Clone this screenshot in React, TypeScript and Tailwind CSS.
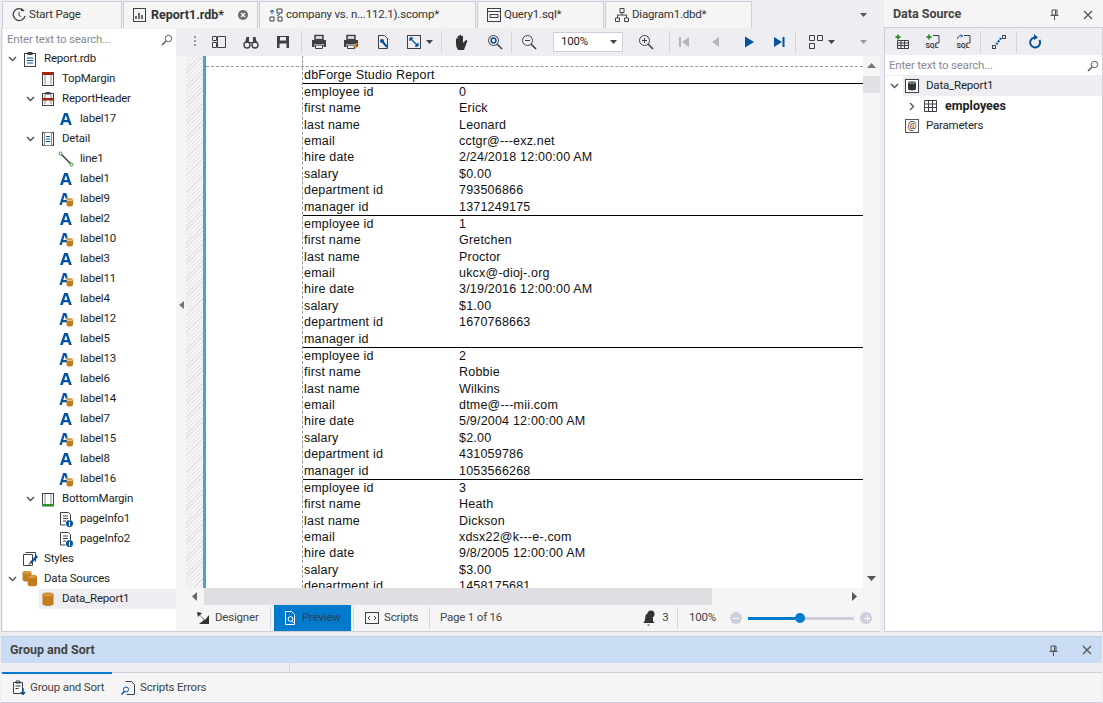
import React from "react";

const UI = "font-['Roboto','Noto_Sans',sans-serif]";
const BOLD = "font-bold text-[12.5px] tracking-normal";

const Ic = ({ children, w = 16, h = 16 }: { children: React.ReactNode; w?: number; h?: number }) => (
  <svg width={w} height={h} viewBox={`0 0 ${w} ${h}`} fill="none" className="shrink-0">
    {children}
  </svg>
);

const D = "#3f3f46";
const B = "#00539c";
const O = "#c27d1e";

const Can = () => (
  <>
    <path d="M2 4v8.500c0 1 2 2 5.500 2s5.500-1 5.500-2V4z" fill={O} />
    <ellipse cx="7.500" cy="3.500" rx="5.500" ry="2" fill="#d99a3f" stroke={O} />
  </>
);

const LabelA = () => (
  <path d="M6.200 2h3.400l4.200 12h-2.700l-.9-2.800H5.600L4.700 14H2zM6.300 9h3.200L7.900 4.200z" fill={B} fillRule="evenodd" />
);

const LabelDb = () => (
  <>
    <path d="M5.200 2h3l3.800 12H9.600l-.8-2.800H4.600L3.800 14H1.400zM5.200 9h3L6.700 4.200z" fill={B} fillRule="evenodd" />
    <path d="M8.500 8.500V14c0 .8 1.300 1.500 3.200 1.500s3.300-.7 3.300-1.500V8.500z" fill={O} />
    <ellipse cx="11.700" cy="8.200" rx="3.300" ry="1.400" fill="#d99a3f" stroke="#fff" strokeWidth=".5" />
  </>
);

const PageInfo = () => (
  <>
    <path d="M2.500 1.500h8l2 2v6M2.500 1.500v12.500h5" stroke={D} />
    <path d="M5 5h5M5 7.500h5M5 10h3" stroke={D} />
    <circle cx="11.500" cy="12.500" r="3.500" fill={B} />
    <path d="M11.500 11v4M11.500 9.500v.8" stroke="#fff" strokeWidth="1.200" />
  </>
);

const Band = ({ kind }: { kind: string }) => (
  <>
    <rect x="2.500" y={kind === "top" ? 1.500 : 2.500} width="11" height={kind === "top" ? 13 : 12} stroke={D} fill="#fff" />
    <path d="M5 2.500v11M11 2.500v11" stroke="#8a8a8a" />
    {kind === "top" && <rect x="2" y="1" width="12" height="3" fill="#a1260d" />}
    {kind === "head" && <rect x="2" y="7" width="12" height="2.500" fill="#a1260d" />}
    {kind === "bottom" && <rect x="2" y="13" width="12" height="2.500" fill="#388a34" />}
  </>
);

type Row = { d: number; t: string; open?: boolean; sel?: boolean; icon: React.ReactNode };

const rows: Row[] = [
  { d: 0, t: "Report.rdb", open: true, icon: <><rect x="2.500" y="2.500" width="11" height="13" stroke={D} fill="#fff" /><rect x="5.500" y="1" width="5" height="3" fill={D} /><path d="M5 7h6M5 9.500h6M5 12h6" stroke={B} /></> },
  { d: 1, t: "TopMargin", icon: <Band kind="top" /> },
  { d: 1, t: "ReportHeader", open: true, icon: <><Band kind="head" /><rect x="5.500" y="1" width="5" height="2.500" fill={D} /></> },
  { d: 2, t: "label17", icon: <LabelA /> },
  { d: 1, t: "Detail", open: true, icon: <><rect x="2.500" y="1.500" width="11" height="13" stroke={D} fill="#fff" /><rect x="4.500" y="1.500" width="7" height="13" stroke="#8a8a8a" /><path d="M6 5.500h4M6 8h4M6 10.500h4" stroke={B} /></> },
  { d: 2, t: "line1", icon: <><path d="M3 3l10 10" stroke={D} strokeWidth="1.500" /><circle cx="2.500" cy="2.500" r="1.500" fill="#fff" stroke="#388a34" /><circle cx="13.500" cy="13.500" r="1.500" fill="#fff" stroke="#388a34" /></> },
  ...[
    ["label1", 0], ["label9", 1], ["label2", 0], ["label10", 1], ["label3", 0], ["label11", 1], ["label4", 0], ["label12", 1],
    ["label5", 0], ["label13", 1], ["label6", 0], ["label14", 1], ["label7", 0], ["label15", 1], ["label8", 0], ["label16", 1],
  ].map(([t, db]) => ({ d: 2, t: t as string, icon: db ? <LabelDb /> : <LabelA /> })),
  { d: 1, t: "BottomMargin", open: true, icon: <Band kind="bottom" /> },
  { d: 2, t: "pageInfo1", icon: <PageInfo /> },
  { d: 2, t: "pageInfo2", icon: <PageInfo /> },
  { d: 0, t: "Styles", icon: <><path d="M1.500 3.500h9v11h-9z" stroke={D} fill="#fff" /><path d="M3.500 1.500h10v9" stroke={D} /><path d="M14.500 4L8 11l-1.500 3 3-1.500L16 6z" fill={B} /><path d="M6.500 14l1.500-3 1.500 1.500z" fill={O} /></> },
  { d: 0, t: "Data Sources", open: true, icon: <><g transform="translate(-1,-1) scale(.8)"><Can /></g><g transform="translate(4,3) scale(.85)"><Can /></g></> },
  { d: 1, t: "Data_Report1", sel: true, icon: <g transform="translate(.5,0.5)"><Can /></g> },
];

const pad = ["pl-0", "pl-[18px]", "pl-[36px]"];

const Chevron = ({ open }: { open?: boolean }) => (
  <span className="w-[18px] flex justify-center shrink-0">
    {open && (
      <svg width="9" height="6" viewBox="0 0 9 6"><path d="M1 1l3.500 3.500L8 1" stroke="#555" strokeWidth="1.500" fill="none" /></svg>
    )}
  </span>
);

const Tree = () => (
  <div className="flex-1 bg-white overflow-hidden">
    {rows.map((r) => (
      <div key={r.t} className={`h-5 flex items-center ${pad[r.d]}`}>
        <Chevron open={r.open} />
        <div className={`h-5 flex-1 flex items-center ${r.sel ? "bg-[#eeeef2]" : ""}`}>
          <span className="w-[18px] flex justify-center"><Ic>{r.icon}</Ic></span>
          <span className="pl-[5px] text-[#1e1e1e]">{r.t}</span>
        </div>
      </div>
    ))}
  </div>
);

const Search = () => (
  <div className="h-5 pt-px bg-white flex items-center justify-between pl-[4px] pr-[3px] text-[#8a8a94] shrink-0">
    <span>Enter text to search...</span>
    <svg width="12" height="12" viewBox="0 0 12 12" fill="none"><circle cx="7.500" cy="4.500" r="3.200" stroke="#555" /><path d="M5 7l-4 4" stroke="#555" strokeWidth="1.400" /></svg>
  </div>
);

const Tab = ({ w, icon, label, active }: { w: string; icon: React.ReactNode; label: string; active?: boolean }) => (
  <div className={`${w} h-[27px] mt-px bg-[#f5f5f5] border border-b-0 border-[#cccedb] flex items-center pl-[8px] gap-[2px] text-[#333] shrink-0`}>
    <Ic>{icon}</Ic>
    <span className={active ? `${BOLD} flex-1 ml-[1px]` : "flex-1"}>{label}</span>
    {active && (
      <span className="w-[10px] h-[10px] mr-[9px] rounded-full bg-[#6d6d6d] flex items-center justify-center">
        <svg width="6" height="6" viewBox="0 0 6 6"><path d="M1 1l4 4M5 1L1 5" stroke="#fff" strokeWidth="1.200" /></svg>
      </span>
    )}
  </div>
);

const Btn = ({ w = "w-8", children }: { w?: string; children: React.ReactNode }) => (
  <div className={`${w} h-full flex items-center justify-center shrink-0`}>{children}</div>
);

const Sep = ({ m = "mx-[2px]" }: { m?: string }) => <div className={`w-px h-[22px] bg-[#d4d4dc] shrink-0 ${m}`} />;

const Arrow = () => (
  <svg width="7" height="4" viewBox="0 0 7 4" className="ml-[4px]"><path d="M0 0h7L3.500 4z" fill="#444" /></svg>
);

const Printer = ({ flash }: { flash?: boolean }) => (
  <Ic>
    <path d="M4 1.500h8v4H4z" stroke={D} strokeWidth="1.500" />
    <path d="M1 6h14v7h-2.500v-3h-9v3H1z" fill={D} />
    <path d="M4.500 11h7v3.500h-7z" stroke={D} />
    {flash && <path d="M13 9l-3 4h2l-1 3 4-4h-2l2-3z" fill="#d98a1e" />}
  </Ic>
);

const Glass = ({ sign }: { sign?: string }) => (
  <Ic>
    <circle cx="6.500" cy="6.500" r="5" stroke={D} />
    <path d="M10 10l5 5" stroke={D} strokeWidth="1.600" />
    {sign && sign !== "o" && <path d="M4 6.500h5" stroke={D} />}
    {sign === "+" && <path d="M6.500 4v5" stroke={D} />}
    {sign === "o" && <circle cx="6.500" cy="6.500" r="2.400" stroke={B} strokeWidth="1.500" />}
  </Ic>
);

const Toolbar = () => (
  <div className="h-[28px] bg-[#eeeef2] flex items-center shrink-0">
    <div className="w-[27px] flex justify-end pr-[7px]">
      <div className="w-[2px] h-[12px] bg-[repeating-linear-gradient(#9a9a9a_0,#9a9a9a_2px,transparent_2px,transparent_4px)]" />
    </div>
    <Btn><Ic><path d="M1.500 2.500h4v4h-4zM1.500 8.500h4v5h-4zM6.500 2.500h8v11h-8z" stroke={D} /></Ic></Btn>
    <Btn><Ic><circle cx="4" cy="11" r="3" stroke={D} strokeWidth="1.400" /><circle cx="12" cy="11" r="3" stroke={D} strokeWidth="1.400" /><path d="M2 9l1.500-6h2.500v5h4V3h2.500L14 9z" fill={D} /></Ic></Btn>
    <Btn><Ic><path d="M2 2h12v12H2z" fill={D} /><path d="M5 3h6v3.500H5z" fill="#eeeef2" /><path d="M4.500 9.500h7V14h-7z" fill="#eeeef2" /></Ic></Btn>
    <Sep m="ml-[2px] mr-px" />
    <Btn><Printer /></Btn>
    <Btn w="w-[31px]"><Printer flash /></Btn>
    <Btn w="w-[33px]"><Ic><path d="M3.500 1.500h6l3 3v10h-9z" stroke={D} /><path d="M7 7l5 6" stroke={B} strokeWidth="2" /><circle cx="7" cy="7" r="2" fill={B} /></Ic></Btn>
    <Btn w="w-[40px]">
      <Ic><rect x="1.500" y="1.500" width="13" height="13" stroke={D} /><path d="M4 4l8 8M4 4h3M4 4v3M12 12H9M12 12V9" stroke={B} strokeWidth="1.300" /></Ic>
      <Arrow />
    </Btn>
    <Sep m="mx-[2px]" />
    <Btn w="w-[36px]"><Ic w={18} h={18}><path d="M3 10V6c0-1 1.600-1 1.600 0v2.500V3.500c0-1 1.800-1 1.800 0v5V2.500c0-1 1.800-1 1.800 0v6V3.500c0-1 1.800-1 1.800 0V10l2.500-2.500c1-1 2.200 0 1.500 1.200L11 17H6c-1.500 0-3-3-3-7z" fill="#333" /></Ic></Btn>
    <Btn w="w-[29px]"><Glass sign="o" /></Btn>
    <Sep m="mx-[2px]" />
    <Btn w="w-[29px]"><Glass sign="-" /></Btn>
    <div className="ml-[10px] w-[70px] h-[20px] bg-white border border-[#cccedb] flex items-center justify-between pl-[7px] pr-[5px] text-[#1e1e1e]">
      100%
      <svg width="7" height="4" viewBox="0 0 7 4"><path d="M0 0h7L3.500 4z" fill="#444" /></svg>
    </div>
    <Btn w="w-[46px]"><Glass sign="+" /></Btn>
    <Sep m="mx-0" />
    <Btn w="w-[27px]"><Ic><path d="M3 3h2v10H3zM13 3v10L6 8z" fill="#b4b4ba" /></Ic></Btn>
    <Btn w="w-[35px]"><Ic><path d="M12 3v10L5 8z" fill="#b4b4ba" /></Ic></Btn>
    <Btn w="w-[33px]"><Ic><path d="M4 2.500v11L13 8z" fill={B} /></Ic></Btn>
    <Btn w="w-[27px]"><Ic><path d="M3 3v10l8-5zM11.500 3h2v10h-2z" fill={B} /></Ic></Btn>
    <Sep m="mx-[3px]" />
    <Btn w="w-[44px]">
      <Ic><path d="M1.500 1.500h5v5h-5zM9.500 1.500h5v5h-5zM1.500 9.500h5v5h-5z" stroke={D} /></Ic>
      <Arrow />
    </Btn>
    <div className="ml-auto mr-[13px]"><svg width="7" height="4" viewBox="0 0 7 4"><path d="M0 0h7L3.500 4z" fill="#999" /></svg></div>
  </div>
);

const fields = ["employee id", "first name", "last name", "email", "hire date", "salary", "department id", "manager id"];

const records = [
  ["0", "Erick", "Leonard", "cctgr@---exz.net", "2/24/2018 12:00:00 AM", "$0.00", "793506866", "1371249175"],
  ["1", "Gretchen", "Proctor", "ukcx@-dioj-.org", "3/19/2016 12:00:00 AM", "$1.00", "1670768663", ""],
  ["2", "Robbie", "Wilkins", "dtme@---mii.com", "5/9/2004 12:00:00 AM", "$2.00", "431059786", "1053566268"],
  ["3", "Heath", "Dickson", "xdsx22@k---e-.com", "9/8/2005 12:00:00 AM", "$3.00", "1458175681", ""],
];

const Record = ({ values }: { values: string[] }) => (
  <div className="h-[132px] border-t border-black shrink-0 flex flex-col">
    {fields.map((f, i) => (
      <div key={f} className="flex-1 flex items-center pl-px leading-none">
        <span className="w-[155px] shrink-0">{f}</span>
        <span>{values[i]}</span>
      </div>
    ))}
  </div>
);

const Report = () => (
  <div className="flex-1 min-h-0 flex">
    <div className="flex-1 min-w-0 flex bg-white overflow-hidden">
      <div className="w-[17px] shrink-0 bg-[repeating-linear-gradient(135deg,#e2e2e2_0,#e2e2e2_1px,#f5f5f5_1px,#f5f5f5_3px)]" />
      <div className="w-[3px] shrink-0 bg-[#4a9fe0]" />
      <div className="flex-1 min-w-0 flex flex-col font-['Liberation_Sans',sans-serif] text-[12.5px] text-[#111] tracking-[0.2px]">
        <div className="h-[11px] border-b border-dashed border-[#999] shrink-0 pl-[96px]">
          <div className="w-px h-[11px] border-l border-dashed border-[#999]" />
        </div>
        <div className="flex-1 min-h-0 flex">
          <div className="w-[96px] shrink-0" />
          <div className="flex-1 min-w-0 border-l border-dashed border-[#999] overflow-hidden flex flex-col">
            <div className="h-[16px] flex items-center pl-px shrink-0">dbForge Studio Report</div>
            {records.map((v) => <Record key={v[0]} values={v} />)}
          </div>
        </div>
      </div>
    </div>
    <div className="w-[17px] shrink-0 bg-[#f5f5f5] flex flex-col items-center">
      <svg width="9" height="5" viewBox="0 0 9 5" className="mt-[7px]"><path d="M0 5h9L4.500 0z" fill="#777" /></svg>
      <div className="w-full h-[17px] bg-[#e0e0e5] mt-[8px]" />
      <svg width="9" height="5" viewBox="0 0 9 5" className="mt-auto mb-[7px]"><path d="M0 0h9L4.500 5z" fill="#555" /></svg>
    </div>
  </div>
);

const HScroll = () => (
  <div className="h-[17px] shrink-0 bg-[#f5f5f5] flex items-center">
    <svg width="5" height="9" viewBox="0 0 5 9" className="ml-[16px] mr-[7px]"><path d="M5 0v9L0 4.500z" fill="#666" /></svg>
    <div className="w-[508px] h-full bg-[#dedee3]" />
    <svg width="5" height="9" viewBox="0 0 5 9" className="ml-[140px]"><path d="M0 0v9l5-4.500z" fill="#555" /></svg>
  </div>
);

const StatusBar = () => (
  <div className="h-[26px] shrink-0 bg-[#f5f5f5] flex items-center text-[#444]">
    <div className="w-[94px] pl-[20px] flex items-center gap-[5px] h-full">
      <Ic w={14} h={14}><path d="M1 1l8 8 4-5v9H3l5-4z" fill="#333" /><path d="M1 1l5 1-4 4z" fill="#333" /></Ic>
      Designer
    </div>
    <Sep m="mr-[3px]" />
    <div className="w-[77px] h-full bg-[#007acc] flex items-center pl-[9px] gap-[5px] text-[#30404f]">
      <Ic w={14} h={14}><path d="M2.500 .5h6l3 3v10h-9z" stroke="#fff" /><circle cx="7.500" cy="8" r="2.400" stroke="#fff" /><path d="M9 10l3 3" stroke="#fff" /></Ic>
      Preview
    </div>
    <Sep m="ml-[2px]" />
    <div className="flex items-center pl-[11px] gap-[5px] w-[75px]">
      <Ic w={14} h={14}><rect x=".5" y="1.500" width="13" height="11" stroke={D} /><path d="M5 5L3 7l2 2M9 5l2 2-2 2" stroke={D} /></Ic>
      Scripts
    </div>
    <Sep m="mr-[10px]" />
    <span>Page 1 of 16</span>
    <div className="ml-auto flex items-center">
      <Ic><path d="M2 13c2-1 2-4 2.500-7S7 3 8 4c-1 2 1 4 4 3v4l1.500 2z" fill="#333" /><circle cx="10" cy="4" r="3.500" fill="#333" /><path d="M6.500 15h2" stroke="#333" /></Ic>
      <span className="ml-[2px] w-[13px] text-center">3</span>
      <Sep m="ml-[5px]" />
      <span className="ml-[11px] w-[28px]">100%</span>
      <div className="ml-[13px] w-[12px] h-[12px] rounded-full bg-[#cccedb] flex items-center justify-center"><div className="w-[6px] h-px bg-white" /></div>
      <div className="mx-[6px] w-[106px] h-[3px] bg-[#cccedb] flex items-center">
        <div className="w-[47px] h-full bg-[#007acc]" />
        <div className="w-[10px] h-[10px] rounded-full bg-[#007acc]" />
      </div>
      <div className="mr-[8px] w-[12px] h-[12px] rounded-full bg-[#cccedb] flex items-center justify-center">
        <div className="w-[6px] h-px bg-white" />
        <div className="w-px h-[6px] bg-white -ml-[3.500px]" />
      </div>
    </div>
  </div>
);

const PinClose = () => (
  <div className="flex items-center gap-[24px] text-[#444]">
    <svg width="9" height="11" viewBox="0 0 9 11" fill="none"><path d="M2 1h5v5H2zM.5 6.500h8M4.500 7v4M5.500 1v5" stroke="#555" /></svg>
    <svg width="10" height="10" viewBox="0 0 10 10"><path d="M1 1l8 8M9 1L1 9" stroke="#555" strokeWidth="1.300" /></svg>
  </div>
);

const DsRow = ({ children, bg }: { children: React.ReactNode; bg?: string }) => (
  <div className={`h-5 flex items-center ${bg || ""}`}>{children}</div>
);

const SqlIcon = ({ children }: { children: React.ReactNode }) => (
  <div className="relative w-4 h-4">
    <Ic><path d="M8 1.500h6v7.500h-3" stroke={D} />{children}</Ic>
    <span className="absolute left-[1px] top-[9px] text-[7px] leading-none font-bold tracking-normal text-[#333]">SQL</span>
  </div>
);

const DataSource = () => (
  <div className="w-[219px] ml-[4px] shrink-0 flex flex-col bg-white">
    <div className="h-[28px] pt-[2px] bg-[#f5f5f5] flex items-center justify-between pl-[9px] pr-[10px] border-b border-[#cccedb] shrink-0">
      <span className={`${BOLD} text-[#444]`}>Data Source</span>
      <PinClose />
    </div>
    <div className="flex-1 flex flex-col border border-t-0 border-[#cccedb] min-h-0">
      <div className="h-[27px] bg-[#eeeef2] flex items-center pl-px shrink-0">
        <Btn w="w-[31px]"><Ic><path d="M3.500 6.500h11v8h-11zM3.500 9h11M3.500 11.500h11M7 6.500v8M10.500 6.500v8" stroke={D} /><path d="M4 .5v5M1.500 3h5" stroke="#388a34" strokeWidth="1.800" /></Ic></Btn>
        <Btn w="w-[31px]"><SqlIcon><path d="M4 .5v5M1.500 3h5" stroke="#388a34" strokeWidth="1.800" /></SqlIcon></Btn>
        <Btn w="w-[31px]"><SqlIcon><path d="M1.500 5c0-3 3-4 5-3M6.500 2l-1.500-1.500M6.500 2L5 3.500" stroke={B} /></SqlIcon></Btn>
        <Sep m="mx-[1px]" />
        <Btn w="w-[33px]"><Ic><path d="M10 4L5 11" stroke={B} strokeWidth="2" strokeDasharray="2 1" /><rect x="1.500" y="11.500" width="3" height="3" stroke={D} /><rect x="11.500" y="1.500" width="3" height="3" stroke={D} /></Ic></Btn>
        <Sep m="mx-[1px]" />
        <Btn w="w-[34px]"><Ic><path d="M12.500 6a5 5 0 1 1-3.500-2.500" stroke={B} strokeWidth="2" /><path d="M7 0l4 3.500L7 6z" fill={B} /></Ic></Btn>
      </div>
      <Search />
      <div className="flex-1 pt-0 border-t border-[#eeeef2]">
        <DsRow>
          <Chevron open />
          <div className="flex-1 h-5 bg-[#eeeef2] flex items-center">
            <span className="w-[18px] flex justify-center"><Ic><rect x="1.500" y="1.500" width="13" height="13" stroke={D} fill="#fff" /><path d="M4 5v6c0 .7 1.700 1.500 4 1.500s4-.8 4-1.500V5z" fill="#333" /><ellipse cx="8" cy="4.500" rx="4" ry="1.500" fill="#777" /></Ic></span>
            <span className="pl-[5px] text-[#1e1e1e]">Data_Report1</span>
          </div>
        </DsRow>
        <DsRow>
          <span className="w-[18px]" />
          <span className="w-[18px] flex justify-center"><svg width="6" height="9" viewBox="0 0 6 9"><path d="M1 1l3.500 3.500L1 8" stroke="#555" strokeWidth="1.400" fill="none" /></svg></span>
          <span className="w-[18px] flex justify-center"><Ic><path d="M2.500 2.500h12v11h-12zM2.500 6h12M2.500 9.500h12M6.500 2.500v11M10.500 2.500v11" stroke={D} /></Ic></span>
          <span className={`pl-[6px] ${BOLD} text-[#1e1e1e]`}>employees</span>
        </DsRow>
        <DsRow>
          <span className="w-[18px]" />
          <span className="w-[18px] flex justify-center"><span className="w-[14px] h-[14px] border border-[#555] flex items-center justify-center text-[10px] leading-none text-[#333]">@</span></span>
          <span className="pl-[5px] text-[#1e1e1e]">Parameters</span>
        </DsRow>
      </div>
    </div>
  </div>
);

const BottomPanel = () => (
  <div className="flex-1 flex flex-col mt-[4px] mx-px min-h-0">
    <div className="h-[27px] bg-[#c9dcf3] border-t border-[#cccedb] flex items-center justify-between pl-[9px] pr-[10px] shrink-0">
      <span className={`${BOLD} text-[#444]`}>Group and Sort</span>
      <PinClose />
    </div>
    <div className="h-[9px] bg-[#eeeef2] shrink-0 flex justify-start pl-[288px]">
      <div className="w-px h-full bg-[#d4d4dc]" />
    </div>
    <div className="flex-1 bg-[#f5f5f5] border-t border-b border-[#cccedb] flex items-center text-[#444] relative whitespace-nowrap">
      <div className="absolute left-px -top-px w-[110px] h-[2px] bg-[#007acc]" />
      <div className="flex items-center pl-[10px] gap-[4px] w-[111px]">
        <Ic w={15} h={15}><path d="M2.500 2.500h9v11h-9zM5 1h4v2H5z" stroke={D} /><path d="M4.500 6h5M4.500 8.500h3" stroke={D} /><path d="M12 8v6M10 12l2 2.500 2-2.500" stroke={B} strokeWidth="1.400" /></Ic>
        Group and Sort
      </div>
      <div className="flex items-center pl-[9px] gap-[4px]">
        <Ic w={15} h={15}><path d="M4.500 1.500h6l3 3v10h-8" stroke={D} /><circle cx="5" cy="9.500" r="2.500" stroke={B} /><path d="M3.200 11.500L.5 14.500" stroke={B} strokeWidth="1.500" /></Ic>
        Scripts Errors
      </div>
    </div>
  </div>
);

export default function App() {
  return (
    <div className={`${UI} w-[1103px] h-[703px] bg-[#eeeef2] flex flex-col text-[11.5px] tracking-[-0.2px] overflow-hidden`}>
      <div className="h-[632px] flex shrink-0">
        <div className="w-[880px] shrink-0 flex flex-col">
          <div className="h-[28px] flex gap-[1px] pl-[2px] shrink-0 items-start relative">
            <Tab w="w-[120px]" label="Start Page" icon={<><path d="M13 4a6 6 0 1 0 1 5" stroke={D} strokeWidth="1.300" /><path d="M8 5v3.500l2 1" stroke={D} /><path d="M10 1l3 3h-3z" fill={D} /></>} />
            <Tab w="w-[135px]" active label="Report1.rdb*" icon={<><rect x="1.500" y="1.500" width="12" height="13" stroke={D} /><path d="M4 12V9M7 12V6M10 12V8" stroke={D} strokeWidth="1.500" /></>} />
            <Tab w="w-[217px]" label="company vs. n...112.1).scomp*" icon={<><path d="M9 2h5v4H9zM2 10h4v4H2zM10 10h4v4h-4z" stroke={D} /><path d="M2 5l2-2 2 2M4 3v4M9 9l3-2" stroke={B} /></>} />
            <Tab w="w-[127px]" label="Query1.sql*" icon={<><rect x="1.500" y="1.500" width="13" height="13" stroke={D} /><path d="M1.500 4.500h13M4 7.500h8v3H4z" stroke={D} /></>} />
            <Tab w="w-[147px]" label="Diagram1.dbd*" icon={<><path d="M6 1.500h4v4H6zM1.500 11h4v3.500h-4zM10.500 11h4v3.500h-4zM8 5.500V8M3.500 11V8h9v3" stroke={D} /></>} />
            <svg width="7" height="4" viewBox="0 0 7 4" className="absolute left-[860px] top-[13px]"><path d="M0 0h7L3.500 4z" fill="#555" /></svg>
          </div>
          <div className="flex-1 min-h-0 flex border-l border-[#cccedb] border-b ml-px">
            <div className="w-[173px] shrink-0 flex flex-col ml-px pt-px">
              <Search />
              <Tree />
            </div>
            <div className="flex-1 min-w-0 flex flex-col">
              <Toolbar />
              <div className="flex-1 min-h-0 flex flex-col">
                <div className="flex-1 min-h-0 flex">
                  <div className="w-[10px] shrink-0 bg-[#f5f5f5] flex items-center justify-center pb-[34px]">
                    <svg width="5" height="8" viewBox="0 0 5 8"><path d="M5 0v8L0 4z" fill="#777" /></svg>
                  </div>
                  <Report />
                </div>
                <HScroll />
                <StatusBar />
              </div>
            </div>
          </div>
        </div>
        <DataSource />
      </div>
      <BottomPanel />
    </div>
  );
}
